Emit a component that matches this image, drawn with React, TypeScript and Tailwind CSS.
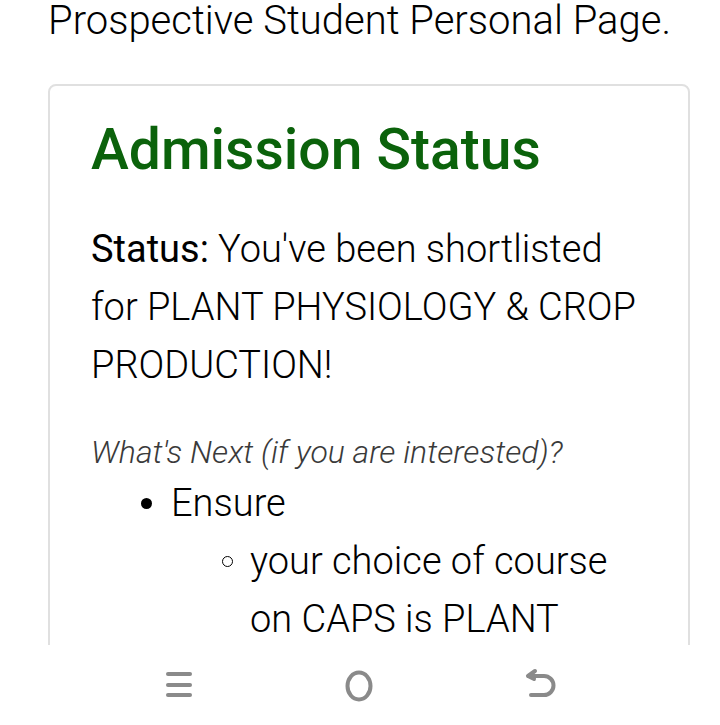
export default function App() {
  return (
    <div className="flex h-[725px] w-[720px] flex-col overflow-hidden bg-white font-['Roboto',sans-serif] text-black">
      <div className="h-[645px] overflow-hidden px-[48px]">
        <h1 className="-mt-[4px] text-[40px] font-light leading-[50px] whitespace-nowrap">
          Prospective Student Personal Page.
        </h1>
        <div className="mt-[38px] mr-[-18px] rounded-[8px] border-2 border-[#e0e0e0] px-[41px] pt-[28px] pb-8">
          <h2 className="text-[57px] font-medium leading-[72px] text-[#0b620b]">Admission Status</h2>
          <p className="mt-[34px] text-[38px] font-light leading-[58px]">
            <span className="font-normal">Status:</span> You've been shortlisted for PLANT PHYSIOLOGY &amp; CROP
            PRODUCTION!
          </p>
          <p className="mt-[36px] text-[32px] font-light italic leading-[44px] text-[#3a3a3a]">
            What's Next (if you are interested)?
          </p>
          <ul className="text-[38px] font-light leading-[58px]">
            <li className="flex pl-[50px]">
              <span className="flex h-[58px] w-[30px] shrink-0 items-center">
                <span className="h-[11px] w-[11px] rounded-full bg-black" />
              </span>
              <div className="min-w-0 flex-1">
                Ensure
                <ul>
                  <li className="flex pl-[51px]">
                    <span className="flex h-[58px] w-[28px] shrink-0 items-center">
                      <span className="h-[11px] w-[11px] rounded-full border-[1.5px] border-black" />
                    </span>
                    <span className="min-w-0 flex-1">
                      your choice of course on CAPS is PLANT PHYSIOLOGY &amp; CROP PRODUCTION
                    </span>
                  </li>
                </ul>
              </div>
            </li>
          </ul>
        </div>
      </div>
      <nav className="flex h-[80px] items-center justify-center gap-[141px] bg-white">
        <svg width="40" height="40" viewBox="0 0 40 40">
          <g stroke="#8a8a8a" strokeWidth="4" strokeLinecap="round">
            <line x1="9" y1="9" x2="31" y2="9" />
            <line x1="9" y1="20" x2="31" y2="20" />
            <line x1="9" y1="30" x2="31" y2="30" />
          </g>
        </svg>
        <svg width="40" height="40" viewBox="0 0 40 40">
          <ellipse cx="19" cy="21" rx="11.5" ry="13.5" fill="none" stroke="#8a8a8a" strokeWidth="4" />
        </svg>
        <svg width="40" height="40" viewBox="0 0 40 40">
          <path
            d="M7 11 L14 6 M7 11 L13 14 M7 11 H23 A9.5 9.5 0 0 1 23 30 H10"
            fill="none"
            stroke="#8a8a8a"
            strokeWidth="4"
            strokeLinecap="round"
            strokeLinejoin="round"
          />
        </svg>
      </nav>
    </div>
  );
}
